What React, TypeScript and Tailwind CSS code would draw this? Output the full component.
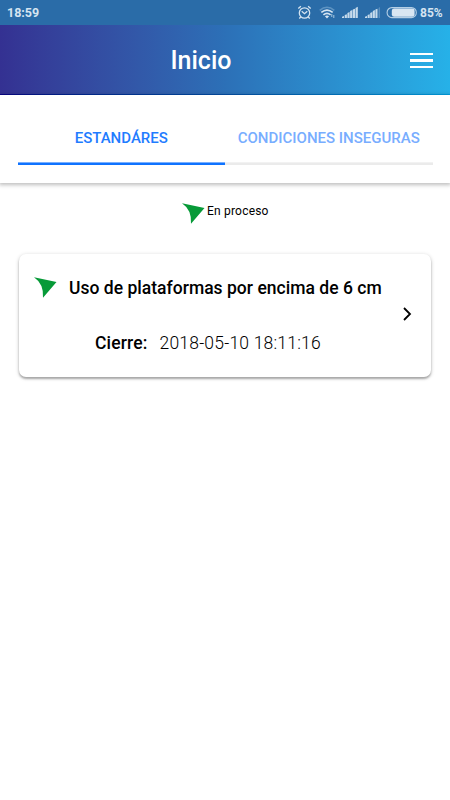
function Arrow() {
  return (
    <svg width="23" height="22" viewBox="0 0 23 22" className="shrink-0">
      <path d="M0 0.3 L22.5 5.1 L9 20.8 Q10 7 0 0.3Z" fill="#079a38" />
    </svg>
  );
}

function StatusIcons() {
  return (
    <svg width="126" height="25" viewBox="292 0 126 25" fill="none" className="shrink-0">
      <g stroke="#d5e4f1" strokeWidth="1.3">
        <circle cx="304.5" cy="13" r="5.2" />
        <path d="M301.7 11.3l2.8 2.4 2.8-2.4M298.3 8.6l2.6-2.4M310.7 8.6l-2.6-2.4M300.7 17l-1.4 1.5M308.3 17l1.4 1.5" />
      </g>
      <path d="M319.7 10.4Q327 4.2 334.3 10.4" stroke="#5d93c2" strokeWidth="1.5" />
      <path d="M321.3 12.4Q327 7.8 332.7 12.4M323.4 14.8Q327 12 330.6 14.8" stroke="#d5e4f1" strokeWidth="1.7" />
      <path d="M324.9 16.2Q327 14.8 329.1 16.2L327 18.5Z" fill="#d5e4f1" />
      <path d="M331.8 14v3M333.8 15v3" stroke="#a9c8e1" strokeWidth="1" />
      <g fill="#c6dbec">
        <path d="M342 18v-1.3l2-.7v2zM344.7 18v-3l2.2-.8V18zM347.4 18v-5l2.2-.9V18zM350.1 18v-7l2.2-.9V18zM352.8 18V9.6l2.2-.9V18zM355.5 18V8l2.3-1.2V18z" />
        <path d="M365 18v-1.3l2-.7v2zM367.6 18v-3l2.1-.8V18zM370.2 18v-5l2.1-.9V18zM372.8 18v-7l2.1-.9V18zM375.4 18V9.6l2.1-.9V18z" />
        <path d="M378.5 18V8l1.5-.9V18z" opacity=".3" />
      </g>
      <rect x="387.1" y="7.6" width="29.2" height="10" rx="4.8" stroke="#b5cfe5" strokeWidth="1.1" />
      <rect x="391.8" y="8.4" width="22.8" height="8.4" rx="2.4" fill="#d9e6f2" />
    </svg>
  );
}

export default function App() {
  return (
    <div className="flex h-[800px] w-[450px] flex-col overflow-hidden bg-white font-['Roboto','Liberation_Sans',sans-serif] text-black">
      <div className="flex h-[25px] shrink-0 items-center bg-[#2a6ca8] pl-[7px] pt-px text-[#d5e4f1]">
        <span className="text-[12.5px] font-bold leading-none">18:59</span>
        <div className="-mt-px ml-auto flex items-center">
          <StatusIcons />
          <span className="w-[32px] pl-[2px] text-[12px] font-bold leading-none">85%</span>
        </div>
      </div>
      <header className="flex h-[69px] shrink-0 items-center bg-gradient-to-r from-[#343192] via-[#2c70b7] to-[#26b1e8] pl-[170.5px] pr-[17px] pt-[2px] text-white">
        <h1 className="text-[25px] font-medium leading-none">Inicio</h1>
        <div className="ml-auto flex w-[23px] flex-col gap-[4px]">
          <span className="h-[2.5px] bg-white" />
          <span className="h-[2.5px] bg-white" />
          <span className="h-[2.5px] bg-white" />
        </div>
      </header>
      <div className="h-px shrink-0 bg-gradient-to-r from-[#08038a] via-[#0550a8] to-[#00a4e8]" />
      <nav className="grid h-[88px] shrink-0 grid-cols-2 px-[17.5px] pb-[18px] text-[15px] font-medium shadow-[0_1px_4px_1px_rgba(0,0,0,0.26)]">
        <div className="flex items-center justify-center border-b-2 border-[#0f73ff] pt-[18px] text-[#1f7cff] shadow-[inset_0_-1px_#78afff]">ESTANDÁRES</div>
        <div className="flex items-center justify-center whitespace-nowrap border-b-2 border-[#ebebeb] pt-[18px] text-[#78adff] shadow-[inset_0_-1px_#f2f2f2]">CONDICIONES INSEGURAS</div>
      </nav>
      <div className="flex items-start pl-[181.5px] pt-[20px]">
        <Arrow />
        <span className="ml-[2.5px] text-[12px] leading-[16px] tracking-[0.2px]">En proceso</span>
      </div>
      <section className="ml-[19px] mt-[29px] flex h-[123px] w-[412px] items-center rounded-[7px] bg-white pl-[15px] pr-[19px] shadow-[0_1px_4px_rgba(0,0,0,0.2),0_2px_2px_rgba(0,0,0,0.25)]">
        <div className="flex h-full flex-1 flex-col pt-[23px]">
          <div className="flex">
            <Arrow />
            <h2 className="ml-[12px] whitespace-nowrap text-[17.5px] font-medium leading-[22px] tracking-[0.02px]">Uso de plataformas por encima de 6 cm</h2>
          </div>
          <div className="mt-[33px] flex gap-[12px] pl-[61px] text-[17.5px] leading-[22px]">
            <span className="font-medium tracking-[0.15px]">Cierre:</span>
            <span className="font-light tracking-[0.2px]">2018-05-10 18:11:16</span>
          </div>
        </div>
        <svg width="10" height="14" viewBox="0 0 10 14" fill="none" className="mb-[3px] shrink-0">
          <path d="M2 1l6 6-6 6" stroke="#000" strokeWidth="1.8" />
        </svg>
      </section>
    </div>
  );
}
